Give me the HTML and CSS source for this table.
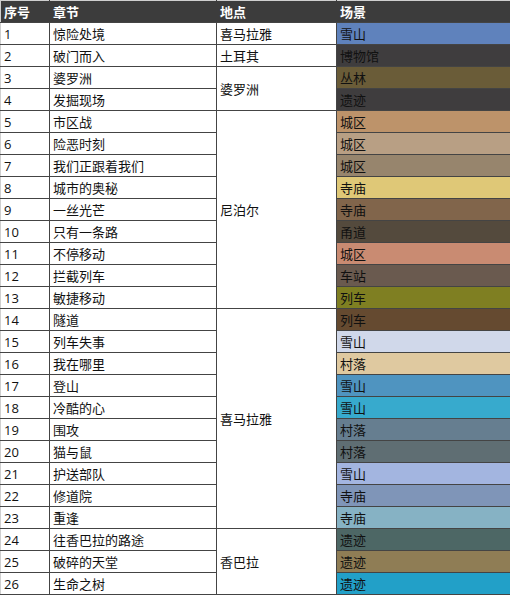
FILE: index.html
```html
<!DOCTYPE html>
<html lang="zh">
<head>
<meta charset="utf-8">
<title>场景表</title>
<link rel="stylesheet" href="styles.css">
</head>
<body>
<table class="scenes">
  <colgroup>
    <col class="c-no">
    <col class="c-ch">
    <col class="c-loc">
    <col class="c-sc">
  </colgroup>
  <thead>
    <tr><th>序号</th><th>章节</th><th>地点</th><th>场景</th></tr>
  </thead>
  <tbody>
    <tr><td>1</td><td>惊险处境</td><td>喜马拉雅</td><td class="s1">雪山</td></tr>
    <tr><td>2</td><td>破门而入</td><td>土耳其</td><td class="s2">博物馆</td></tr>
    <tr><td>3</td><td>婆罗洲</td><td rowspan="2">婆罗洲</td><td class="s3">丛林</td></tr>
    <tr><td>4</td><td>发掘现场</td><td class="s4">遗迹</td></tr>
    <tr><td>5</td><td>市区战</td><td rowspan="9">尼泊尔</td><td class="s5">城区</td></tr>
    <tr><td>6</td><td>险恶时刻</td><td class="s6">城区</td></tr>
    <tr><td>7</td><td>我们正跟着我们</td><td class="s7">城区</td></tr>
    <tr><td>8</td><td>城市的奥秘</td><td class="s8">寺庙</td></tr>
    <tr><td>9</td><td>一丝光芒</td><td class="s9">寺庙</td></tr>
    <tr><td>10</td><td>只有一条路</td><td class="s10">甬道</td></tr>
    <tr><td>11</td><td>不停移动</td><td class="s11">城区</td></tr>
    <tr><td>12</td><td>拦截列车</td><td class="s12">车站</td></tr>
    <tr><td>13</td><td>敏捷移动</td><td class="s13">列车</td></tr>
    <tr><td>14</td><td>隧道</td><td rowspan="10">喜马拉雅</td><td class="s14">列车</td></tr>
    <tr><td>15</td><td>列车失事</td><td class="s15">雪山</td></tr>
    <tr><td>16</td><td>我在哪里</td><td class="s16">村落</td></tr>
    <tr><td>17</td><td>登山</td><td class="s17">雪山</td></tr>
    <tr><td>18</td><td>冷酷的心</td><td class="s18">雪山</td></tr>
    <tr><td>19</td><td>围攻</td><td class="s19">村落</td></tr>
    <tr><td>20</td><td>猫与鼠</td><td class="s20">村落</td></tr>
    <tr><td>21</td><td>护送部队</td><td class="s21">雪山</td></tr>
    <tr><td>22</td><td>修道院</td><td class="s22">寺庙</td></tr>
    <tr><td>23</td><td>重逢</td><td class="s23">寺庙</td></tr>
    <tr><td>24</td><td>往香巴拉的路途</td><td rowspan="3">香巴拉</td><td class="s24">遗迹</td></tr>
    <tr><td>25</td><td>破碎的天堂</td><td class="s25">遗迹</td></tr>
    <tr><td>26</td><td>生命之树</td><td class="s26">遗迹</td></tr>
  </tbody>
</table>
</body>
</html>
```
FILE: styles.css
```css
html, body {
  margin: 0;
  padding: 0;
  background: #ffffff;
}

.scenes {
  border-collapse: collapse;
  table-layout: fixed;
  width: 510px;
  font-family: "Open Sans", "Noto Sans CJK SC", sans-serif;
  font-size: 13px;
  color: #111111;
  border-top: 1px solid #cfcfcf;
  border-left: 1px solid #cfcfcf;
}

.c-no { width: 49px; }
.c-ch { width: 167px; }
.c-loc { width: 120px; }
.c-sc { width: 174px; }

.scenes th,
.scenes td {
  height: 21px;
  padding: 0 3px;
  line-height: 20px;
  text-align: left;
  vertical-align: middle;
  border: 1px solid #444444;
  white-space: nowrap;
  overflow: hidden;
}

.scenes th {
  background: #3c3c3c;
  color: #ffffff;
  font-weight: bold;
  border-color: #3c3c3c;
  border-bottom-color: #444444;
  border-top: 1px solid #cfcfcf;
}

.scenes tr > :first-child {
  border-left: 1px solid #cfcfcf;
}

.s1 { background: #5f82bc; }
.s2 { background: #3f3d3e; }
.s3 { background: #6a5c38; }
.s4 { background: #3f3d3e; }
.s5 { background: #bd936a; }
.s6 { background: #b89f84; }
.s7 { background: #97856d; }
.s8 { background: #dfc877; }
.s9 { background: #81654b; }
.s10 { background: #544a3d; }
.s11 { background: #c98b72; }
.s12 { background: #6a5a4f; }
.s13 { background: #7f7f22; }
.s14 { background: #654a30; }
.s15 { background: #d0d8ea; }
.s16 { background: #dfc9a0; }
.s17 { background: #4f94c0; }
.s18 { background: #37aacd; }
.s19 { background: #667e90; }
.s20 { background: #5f6e73; }
.s21 { background: #a3b5e0; }
.s22 { background: #7f95b8; }
.s23 { background: #86b2c4; }
.s24 { background: #4d6765; }
.s25 { background: #8f7d55; }
.s26 { background: #22a0c8; }
```
